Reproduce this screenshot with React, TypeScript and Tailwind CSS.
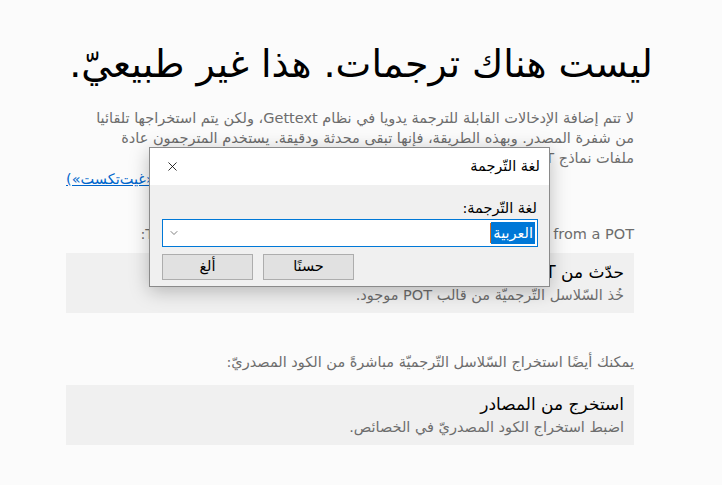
import { X, ChevronDown } from "lucide-react"

const font = { fontFamily: '"DejaVu Sans", "Noto Sans", sans-serif' }

function Panel({ title, sub }: { title: string; sub: string }) {
    return (
        <div className="bg-[#f0f0f0] h-[60px] px-[10px] pt-[7px]">
            <div className="text-[17px] leading-[24px] text-black">{title}</div>
            <div className="mt-[1px] text-[14.5px] leading-[20px] text-[#6d6d6d]">{sub}</div>
        </div>
    )
}

export default function App() {
    return (
        <div dir="rtl" className="relative w-[722px] h-[485px] bg-[#fbfbfb] overflow-hidden" style={font}>
            {/* heading */}
            <h1 className="pt-[36px] text-center text-[38px] leading-[56px] text-black">
                ليست هناك ترجمات. هذا غير طبيعيّ.
            </h1>

            <div className="mr-[88px] ml-[66px] mt-[16px]">
                <p className="text-[14.5px] leading-[20px] text-[#6d6d6d] whitespace-nowrap">
                    لا تتم إضافة الإدخالات القابلة للترجمة يدويا في نظام Gettext، ولكن يتم استخراجها تلقائيا
                    <br />
                    من شفرة المصدر. وبهذه الطريقة، فإنها تبقى محدثة ودقيقة. يستخدم المترجمون عادة
                    <br />
                    ملفات نماذج POT التي أعدها المطورون.
                </p>
                <div className="text-left -mt-[1px]">
                    <a className="text-[14.5px] leading-[20px] text-[#0066cc] underline">(اقرأ المزيد عن «غيت‌تكست»)</a>
                </div>

                <p className="mt-[33px] text-[14.5px] leading-[20px] text-[#6d6d6d]">
                    The most common way to create translations is to start from a POT:
                </p>

                <div className="mt-[9px]">
                    <Panel title="حدّث من POT" sub="خُذ السّلاسل التّرجميّة من قالب POT موجود." />
                </div>

                <p className="mt-[39px] text-[14.5px] leading-[20px] text-[#6d6d6d]">
                    يمكنك أيضًا استخراج السّلاسل التّرجميّة مباشرةً من الكود المصدريّ:
                </p>

                <div className="mt-[13px]">
                    <Panel title="استخرج من المصادر" sub="اضبط استخراج الكود المصدريّ في الخصائص." />
                </div>
            </div>

            {/* dialog */}
            <div className="absolute left-[149px] top-[147px] w-[401px] h-[140px] border border-[#8a8a8a] bg-[#f0f0f0] shadow-[0_4px_18px_rgba(0,0,0,0.25)] flex flex-col">
                <div className="h-[37px] bg-white flex items-center justify-between pr-[9px] pl-[15px]">
                    <span className="text-[14.5px] text-black">لغة التّرجمة</span>
                    <X className="w-[15px] h-[15px] text-black" strokeWidth={1.3} />
                </div>
                <div className="flex-1 pr-[11px] pl-[12px] pt-[13px]">
                    <div className="text-[14.5px] leading-[20px] text-black pr-[1px]">لغة التّرجمة:</div>
                    <div className="mt-[1px] h-[28px] bg-white border border-[#0078d7] flex items-center justify-between pr-[2px] pl-[5px]">
                        <span className="flex items-center">
                            <span className="bg-[#0078d7] text-white text-[14.5px] leading-[22px] px-[2px]">العربية</span>
                            <span className="w-[1px] h-[20px] bg-[#e07020]" />
                        </span>
                        <ChevronDown className="w-[12px] h-[12px] text-[#555]" strokeWidth={1.5} />
                    </div>
                    <div className="mt-[7px] flex justify-end gap-[10px]">
                        <button className="w-[91px] h-[26px] bg-[#e1e1e1] border border-[#adadad] text-[14.5px] text-black">حسنًا</button>
                        <button className="w-[91px] h-[26px] bg-[#e1e1e1] border border-[#adadad] text-[14.5px] text-black">ألغ</button>
                    </div>
                </div>
            </div>
        </div>
    )
}
